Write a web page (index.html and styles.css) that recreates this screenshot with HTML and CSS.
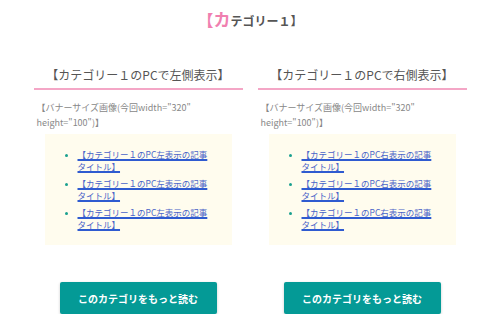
FILE: index.html
```html
<!DOCTYPE html>
<html lang="ja">
<head>
    <meta charset="UTF-8">
    <meta name="viewport" content="width=device-width, initial-scale=1.0">
    <title>カテゴリー１</title>
    <link rel="stylesheet" href="styles.css">
</head>
<body>
    <div class="page">
        <h1 class="cat-title"><span class="accent">【<span class="big">カ</span></span>テゴリー１】</h1>

        <div class="cols">
            <!-- 左側 -->
            <section class="col">
                <h2 class="col-head">【カテゴリー１のPCで左側表示】</h2>
                <p class="banner">【バナーサイズ画像(今回width="320" height="100")】</p>
                <div class="posts">
                    <ul>
                        <li><a href="#">【カテゴリー１のPC左表示の記事タイトル】</a></li>
                        <li><a href="#">【カテゴリー１のPC左表示の記事タイトル】</a></li>
                        <li><a href="#">【カテゴリー１のPC左表示の記事タイトル】</a></li>
                    </ul>
                </div>
                <a href="#" class="more-btn">このカテゴリをもっと読む</a>
            </section>

            <!-- 右側 -->
            <section class="col">
                <h2 class="col-head">【カテゴリー１のPCで右側表示】</h2>
                <p class="banner">【バナーサイズ画像(今回width="320" height="100")】</p>
                <div class="posts">
                    <ul>
                        <li><a href="#">【カテゴリー１のPC右表示の記事タイトル】</a></li>
                        <li><a href="#">【カテゴリー１のPC右表示の記事タイトル】</a></li>
                        <li><a href="#">【カテゴリー１のPC右表示の記事タイトル】</a></li>
                    </ul>
                </div>
                <a href="#" class="more-btn">このカテゴリをもっと読む</a>
            </section>
        </div>
    </div>
</body>
</html>
```

FILE: styles.css
```css
* {
    box-sizing: border-box;
    margin: 0;
    padding: 0;
}

body {
    font-family: "Noto Sans CJK JP", "Noto Sans", sans-serif;
    background-color: #fff;
    color: #555;
}

.page {
    width: 433px;
    margin: 0 auto;
    padding-top: 8px;
}

.cat-title {
    text-align: center;
    font-size: 12px;
    line-height: 22px;
    font-weight: bold;
    color: #555;
}

.cat-title .accent {
    color: #f07fb0;
    font-size: 16px;
}

.cat-title .big {
    font-size: 17px;
}

.cols {
    display: grid;
    grid-template-columns: 1fr 1fr;
    gap: 15px;
    margin-top: 33px;
}

.col-head {
    text-align: center;
    font-size: 12px;
    font-weight: normal;
    line-height: 20px;
    padding-bottom: 3px;
    border-bottom: 2px solid #f4a6c6;
    color: #555;
}

.banner {
    margin-top: 10px;
    padding-left: 3px;
    font-size: 9px;
    line-height: 15px;
    color: #888;
}

.posts {
    margin: 4px 11px 0;
    height: 111px;
    background-color: #fffcee;
    padding: 15px 22px 0 33px;
}

.posts ul {
    list-style: disc;
}

.posts li {
    font-size: 8.5px;
    line-height: 11.5px;
    margin-bottom: 6px;
}

.posts li::marker {
    color: #1aa08f;
}

.posts a {
    color: #4a64c8;
    text-decoration: underline;
    text-decoration-color: #2f5bd0;
    text-decoration-thickness: 1.5px;
}

.more-btn {
    display: flex;
    align-items: center;
    justify-content: center;
    width: 157px;
    height: 32px;
    margin: 37px auto 0;
    background-color: #049a96;
    color: #fff;
    font-size: 10px;
    font-weight: bold;
    text-decoration: none;
    border-radius: 2px;
    box-shadow: 0 1px 3px rgba(0, 0, 0, 0.2);
}
```
